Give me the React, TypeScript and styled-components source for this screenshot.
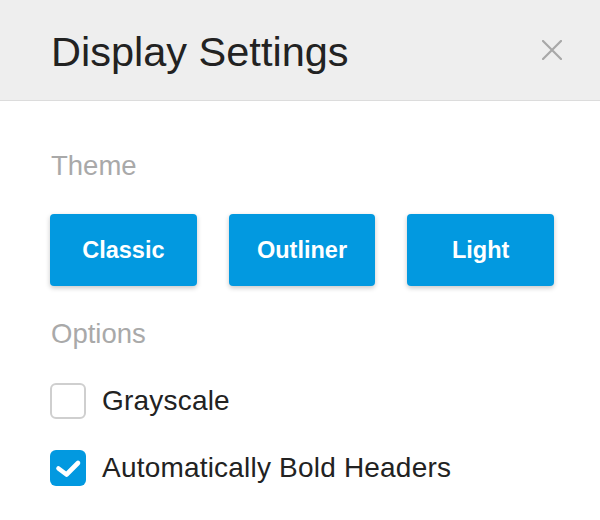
import React, { useState } from "react";
import styled, { createGlobalStyle } from "styled-components";

const GlobalStyle = createGlobalStyle`
  html, body { margin: 0; padding: 0; background: #ffffff; }
  body { font-family: "Liberation Sans", Arial, sans-serif; -webkit-font-smoothing: antialiased; }
  * { box-sizing: border-box; }
`;

const Panel = styled.div`
  width: 600px;
  height: 520px;
  background: #ffffff;
  overflow: hidden;
`;

const Header = styled.header`
  height: 101px;
  background: #eeeeee;
  border-bottom: 1px solid #dcdcdc;
  display: flex;
  align-items: center;
  justify-content: space-between;
  padding: 3px 38px 0 51px;
`;

const Title = styled.h1`
  margin: 0;
  font-size: 41.5px;
  font-weight: 400;
  color: #222222;
  line-height: 1;
`;

const CloseButton = styled.button`
  width: 20px;
  height: 20px;
  padding: 0;
  border: none;
  background: transparent;
  display: flex;
  cursor: pointer;
  margin-top: -3px;
`;

const Body = styled.div`
  padding: 49px 46px 0 50px;
  display: flex;
  flex-direction: column;
`;

const SectionLabel = styled.div<{ $top?: number }>`
  font-size: 27.5px;
  line-height: 32px;
  color: #a9a9a9;
  margin-top: ${(p) => p.$top ?? 0}px;
  padding-left: 1px;
`;

const ThemeGrid = styled.div`
  display: grid;
  grid-template-columns: repeat(3, 1fr);
  gap: 32px;
  margin-top: 32px;
`;

const ThemeButton = styled.button`
  height: 72px;
  border: none;
  border-radius: 4px;
  background: #0299e0;
  color: #ffffff;
  font-family: "Liberation Sans", Arial, sans-serif;
  font-weight: 700;
  font-size: 23.5px;
  box-shadow: 0 2px 5px rgba(0, 0, 0, 0.22);
  cursor: pointer;
`;

const OptionList = styled.div`
  display: flex;
  flex-direction: column;
  gap: 31px;
  margin-top: 33px;
`;

const OptionRow = styled.label`
  display: flex;
  align-items: center;
  gap: 16px;
  cursor: pointer;
`;

const Box = styled.span<{ $checked: boolean }>`
  width: 36px;
  height: 36px;
  border-radius: 6px;
  flex: none;
  display: flex;
  align-items: center;
  justify-content: center;
  background: ${(p) => (p.$checked ? "#0299e0" : "#ffffff")};
  border: ${(p) => (p.$checked ? "none" : "2px solid #cfcfcf")};
`;

const OptionText = styled.span`
  font-size: 28px;
  color: #222222;
  line-height: 32px;
  letter-spacing: 0.2px;
`;

const CloseIcon = () => (
  <svg width="20" height="20" viewBox="0 0 20 20">
    <path d="M1 1 L19 19 M19 1 L1 19" stroke="#a8a8a8" strokeWidth="2.2" strokeLinecap="square" />
  </svg>
);

const CheckIcon = () => (
  <svg width="36" height="36" viewBox="0 0 36 36">
    <path d="M8.5 18.5 L16.5 24.5 L28 13" fill="none" stroke="#ffffff" strokeWidth="4.6" strokeLinecap="round" strokeLinejoin="round" />
  </svg>
);

const Option = ({ label, checked, onToggle }: { label: string; checked: boolean; onToggle: () => void }) => (
  <OptionRow onClick={onToggle}>
    <Box $checked={checked}>{checked && <CheckIcon />}</Box>
    <OptionText>{label}</OptionText>
  </OptionRow>
);

export default function App() {
  const [gray, setGray] = useState(false);
  const [bold, setBold] = useState(true);
  return (
    <Panel>
      <GlobalStyle />
      <Header>
        <Title>Display Settings</Title>
        <CloseButton aria-label="Close">
          <CloseIcon />
        </CloseButton>
      </Header>
      <Body>
        <SectionLabel>Theme</SectionLabel>
        <ThemeGrid>
          <ThemeButton>Classic</ThemeButton>
          <ThemeButton>Outliner</ThemeButton>
          <ThemeButton>Light</ThemeButton>
        </ThemeGrid>
        <SectionLabel $top={32}>Options</SectionLabel>
        <OptionList>
          <Option label="Grayscale" checked={gray} onToggle={() => setGray(!gray)} />
          <Option label="Automatically Bold Headers" checked={bold} onToggle={() => setBold(!bold)} />
        </OptionList>
      </Body>
    </Panel>
  );
}
